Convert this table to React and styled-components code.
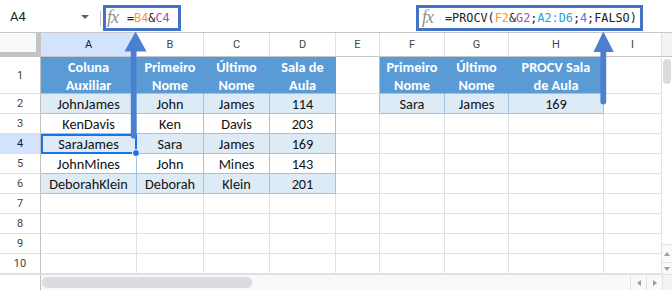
import React from 'react';
import styled, { createGlobalStyle, css } from 'styled-components';

const GlobalStyle = createGlobalStyle`
  html, body { margin: 0; padding: 0; background: #fff; }
  body { font-family: Roboto, "Liberation Sans", Arial, sans-serif; overflow: hidden; }
`;

const Page = styled.div`
  position: relative;
  width: 672px;
  height: 290px;
  overflow: hidden;
  background: #fff;
  display: flex;
  flex-direction: column;
`;

const TopBar = styled.div`
  height: 32px;
  flex: none;
  display: flex;
  align-items: flex-start;
  border-bottom: 1px solid #c7c7c7;
`;

const NameBox = styled.div`
  width: 100px;
  height: 32px;
  box-sizing: border-box;
  padding: 0 11px 0 10px;
  display: flex;
  align-items: center;
  justify-content: space-between;
  font-size: 13px;
  color: #202124;
`;

const Caret = styled.span`
  width: 0;
  height: 0;
  border-left: 4px solid transparent;
  border-right: 4px solid transparent;
  border-top: 4px solid #5f6368;
  margin-top: 1px;
`;

const Divider = styled.div`
  width: 1px;
  height: 15px;
  margin: 11px 2px 0 0;
  background: #c7c7c7;
`;

const FormulaBox = styled.div`
  width: ${p => p.$w}px;
  height: 26px;
  margin-top: 5px;
  margin-right: ${p => p.$mr || 0}px;
  box-sizing: border-box;
  border: 3px solid #4472c4;
  display: flex;
  align-items: center;
  padding-left: ${p => p.$pl}px;
  gap: ${p => p.$gap}px;
`;

const Fx = styled.span`
  display: inline-block;
  width: 15px;
  font-family: "Liberation Serif", "DejaVu Serif", serif;
  font-style: italic;
  font-size: 18px;
  line-height: 18px;
  color: #8f8f8f;
  letter-spacing: -1px;
  margin-top: -2px;
`;

const Formula = styled.span`
  font-family: "DejaVu Sans Mono", "Liberation Mono", monospace;
  font-size: 11.8px;
  color: #222;
  white-space: pre;
`;

const Tok = styled.span`
  color: ${p => p.$c};
`;

const Spacer = styled.div`
  flex: 1;
`;

const Body = styled.div`
  display: flex;
  flex: none;
`;

const Grid = styled.div`
  display: grid;
  grid-template-columns: 41px 96px 67px 66px 66px 44px 65px 64px 95px 58px;
  grid-template-rows: 24px 37px repeat(9, 20px);
`;

const Corner = styled.div`
  box-sizing: border-box;
  background: #f8f9fa;
  border-right: 5px solid #c4c4c4;
  border-bottom: 5px solid #c4c4c4;
`;

const ColHead = styled.div`
  box-sizing: border-box;
  display: flex;
  align-items: center;
  justify-content: center;
  font-size: 11px;
  color: ${p => (p.$sel ? '#0b1f4a' : '#444')};
  background: ${p => (p.$sel ? '#d3e3fd' : '#fff')};
  border-right: 1px solid #e1e1e1;
  border-bottom: 1px solid #c7c7c7;
`;

const RowHead = styled.div`
  box-sizing: border-box;
  display: flex;
  align-items: center;
  justify-content: center;
  font-size: 11px;
  color: ${p => (p.$sel ? '#0b1f4a' : '#444')};
  background: ${p => (p.$sel ? '#d3e3fd' : '#fff')};
  border-right: 1px solid #c0c0c0;
  border-bottom: 1px solid #e1e1e1;
`;

const kinds = {
  head: css`
    background: #5b9bd5;
    color: #fff;
    font-weight: 700;
    line-height: 18px;
    border-right: 1px solid #5b9bd5;
    border-bottom: 1px solid #9dc3e6;
  `,
  band: css`
    background: #ddebf7;
    border-right: 1px solid #9dc3e6;
    border-bottom: 1px solid #9dc3e6;
  `,
  plain: css`
    background: #fff;
    border-right: 1px solid #9dc3e6;
    border-bottom: 1px solid #9dc3e6;
  `,
  empty: css`
    background: #fff;
    border-right: 1px solid #e1e1e1;
    border-bottom: 1px solid #e1e1e1;
  `,
  edge: css`
    background: #fff;
    border-right: 1px solid #9dc3e6;
    border-bottom: 1px solid #e1e1e1;
  `,
};

const Cell = styled.div`
  position: relative;
  box-sizing: border-box;
  display: flex;
  align-items: center;
  justify-content: center;
  text-align: center;
  padding-top: 1px;
  font-family: Carlito, Lato, "Open Sans", sans-serif;
  font-size: 14.3px;
  color: #111;
  white-space: nowrap;
  ${p => kinds[p.$kind]}
  ${p =>
    p.$sel &&
    css`
      z-index: 2;
      &::after {
        content: '';
        position: absolute;
        left: 0;
        top: 0;
        right: -1px;
        bottom: -1px;
        border: 2px solid #1a73e8;
      }
    `}
`;

const Handle = styled.span`
  position: absolute;
  right: -4px;
  bottom: -4px;
  width: 6px;
  height: 6px;
  border-radius: 50%;
  background: #1a73e8;
  border: 1px solid #fff;
  z-index: 3;
`;

const VScroll = styled.div`
  width: 10px;
  display: flex;
  flex-direction: column;
`;

const VScrollHead = styled.div`
  height: 24px;
  box-sizing: border-box;
  background: #f1f3f4;
  border-bottom: 1px solid #c7c7c7;
`;

const VTrack = styled.div`
  flex: 1;
  padding: 2px 1px 0;
`;

const VThumb = styled.div`
  height: 25px;
  border-radius: 4px;
  background: #dadce0;
`;

const ArrowBtn = styled.div`
  height: ${p => p.$h}px;
  box-sizing: border-box;
  background: #f8f9fa;
  border-top: 1px solid #e1e1e1;
  display: flex;
  align-items: center;
  justify-content: center;
`;

const Tri = styled.span`
  width: 0;
  height: 0;
  ${p =>
    p.$dir === 'up' &&
    css`
      border-left: 3px solid transparent;
      border-right: 3px solid transparent;
      border-bottom: 4px solid #9e9e9e;
    `}
  ${p =>
    p.$dir === 'down' &&
    css`
      border-left: 3px solid transparent;
      border-right: 3px solid transparent;
      border-top: 4px solid #9e9e9e;
    `}
  ${p =>
    p.$dir === 'left' &&
    css`
      border-top: 3px solid transparent;
      border-bottom: 3px solid transparent;
      border-right: 4px solid #9e9e9e;
    `}
  ${p =>
    p.$dir === 'right' &&
    css`
      border-top: 3px solid transparent;
      border-bottom: 3px solid transparent;
      border-left: 4px solid #9e9e9e;
    `}
`;

const HScroll = styled.div`
  flex: 1;
  display: flex;
  background: #f8f9fa;
  border-top: 1px solid #e1e1e1;
  box-sizing: border-box;
`;

const HLead = styled.div`
  width: 41px;
  box-sizing: border-box;
  border-right: 1px solid #c0c0c0;
  background: #fff;
`;

const HTrack = styled.div`
  flex: 1;
  padding: 2px 1px;
  display: flex;
`;

const HThumb = styled.div`
  width: 210px;
  border-radius: 5px;
  background: #dadce0;
`;

const HBtn = styled.div`
  width: 16px;
  box-sizing: border-box;
  border-left: 1px solid #e1e1e1;
  display: flex;
  align-items: center;
  justify-content: center;
`;

const HCorner = styled.div`
  width: 10px;
  box-sizing: border-box;
  border-left: 1px solid #e1e1e1;
  background: #f1f3f4;
`;

const Overlay = styled.svg`
  position: absolute;
  left: 0;
  top: 0;
  width: 672px;
  height: 290px;
  pointer-events: none;
  z-index: 10;
`;

const COLS = ['A', 'B', 'C', 'D', 'E', 'F', 'G', 'H', 'I'];

const H = (t) => ({ k: 'head', t });
const E = { k: 'empty' };
const G = { k: 'edge' };

const rows = [
  [H(['Coluna', 'Auxiliar']), H(['Primeiro', 'Nome']), H(['Último', 'Nome']), H(['Sala de', 'Aula']), G, H(['Primeiro', 'Nome']), H(['Último', 'Nome']), H(['PROCV Sala', 'de Aula']), E],
  ['band', 'JohnJames', 'John', 'James', '114', 'edge', 'Sara', 'James', '169'],
  ['plain', 'KenDavis', 'Ken', 'Davis', '203'],
  ['band', 'SaraJames', 'Sara', 'James', '169'],
  ['plain', 'JohnMines', 'John', 'Mines', '143'],
  ['band', 'DeborahKlein', 'Deborah', 'Klein', '201'],
];

function buildRow(i) {
  if (i === 0) return rows[0];
  if (i >= rows.length) return COLS.map(() => E);
  const r = rows[i];
  const kind = r[0];
  const out = [];
  for (let c = 0; c < 4; c++) out.push({ k: kind, t: r[c + 1], sel: i === 3 && c === 0 });
  if (r[5]) {
    out.push(G);
    for (let c = 6; c < 9; c++) out.push({ k: kind, t: r[c] });
    out.push(E);
  } else {
    for (let c = 4; c < 9; c++) out.push(E);
  }
  return out;
}

export default function App() {
  return (
    <>
      <GlobalStyle />
      <Page>
        <TopBar>
          <NameBox>
            <span>A4</span>
            <Caret />
          </NameBox>
          <Divider />
          <FormulaBox $w={78} $pl={1} $gap={5}>
            <Fx>fx</Fx>
            <Formula>
              =<Tok $c="#f29a2e">B4</Tok>&amp;<Tok $c="#9c4fb6">C4</Tok>
            </Formula>
          </FormulaBox>
          <Spacer />
          <FormulaBox $w={227} $mr={29} $pl={3} $gap={8}>
            <Fx>fx</Fx>
            <Formula>
              =PROCV(<Tok $c="#f29a2e">F2</Tok>&amp;<Tok $c="#9c4fb6">G2</Tok>;<Tok $c="#27a5d6">A2:D6</Tok>;<Tok $c="#3f7fe0">4</Tok>;FALSO)
            </Formula>
          </FormulaBox>
        </TopBar>
        <Body>
          <Grid>
            <Corner />
            {COLS.map((c) => (
              <ColHead key={c} $sel={c === 'A'}>{c}</ColHead>
            ))}
            {Array.from({ length: 10 }, (_, i) => (
              <React.Fragment key={i}>
                <RowHead $sel={i === 3}>{i + 1}</RowHead>
                {buildRow(i).map((cell, j) => (
                  <Cell key={j} $kind={cell.k} $sel={cell.sel}>
                    {Array.isArray(cell.t) ? (
                      <span>
                        {cell.t[0]}
                        <br />
                        {cell.t[1]}
                      </span>
                    ) : (
                      cell.t
                    )}
                    {cell.sel && <Handle />}
                  </Cell>
                ))}
              </React.Fragment>
            ))}
          </Grid>
          <VScroll>
            <VScrollHead />
            <VTrack>
              <VThumb />
            </VTrack>
            <ArrowBtn $h={18}>
              <Tri $dir="up" />
            </ArrowBtn>
            <ArrowBtn $h={12}>
              <Tri $dir="down" />
            </ArrowBtn>
          </VScroll>
        </Body>
        <HScroll>
          <HLead />
          <HTrack>
            <HThumb />
          </HTrack>
          <HBtn>
            <Tri $dir="left" />
          </HBtn>
          <HBtn>
            <Tri $dir="right" />
          </HBtn>
          <HCorner />
        </HScroll>
        <Overlay viewBox="0 0 672 290">
          <g fill="#4d7fd0">
            <rect x="130.8" y="46" width="5.6" height="92.5" rx="2.8" />
            <polygon points="124.5,51.5 135.6,31.5 146.5,51.5" />
            <rect x="600.4" y="46" width="5.8" height="58.5" rx="2.9" />
            <polygon points="593.5,52 603.3,31.5 613.8,52" />
          </g>
        </Overlay>
      </Page>
    </>
  );
}
